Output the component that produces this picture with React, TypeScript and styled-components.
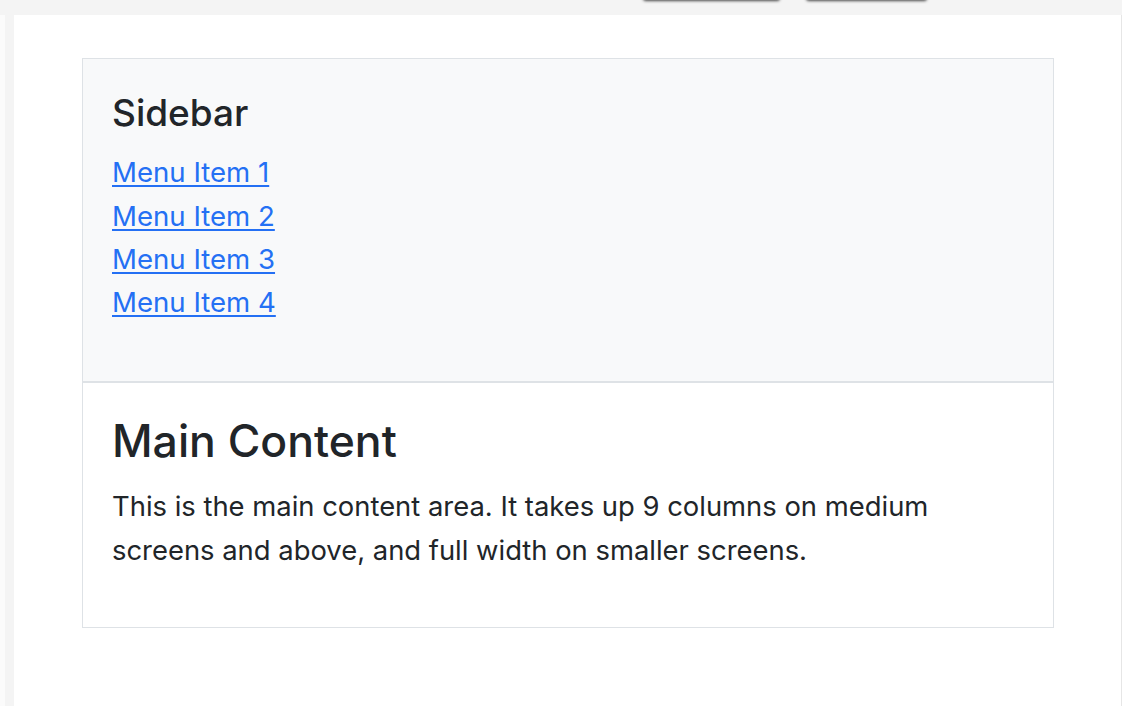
import React from "react";
import styled, { createGlobalStyle } from "styled-components";

const GlobalStyle = createGlobalStyle`
  html, body { margin: 0; padding: 0; }
  body {
    background: #f4f4f4;
    font-family: Inter, "Noto Sans", "Liberation Sans", sans-serif;
    color: #212529;
    overflow: hidden;
  }
`;

const Page = styled.div`
  display: flex;
  flex-direction: column;
  width: 1122px;
  height: 706px;
  background: #f4f4f4;
`;

const TopBar = styled.div`
  height: 15px;
  flex: none;
  display: flex;
  padding-left: 643px;
  gap: 26px;
`;

const GhostButton = styled.div<{ $w: number }>`
  width: ${(p) => p.$w}px;
  height: 20px;
  margin-top: -20px;
  border-radius: 3px;
  background: #d8d8d8;
  box-shadow: 0 1px 3px rgba(0, 0, 0, 0.7);
`;

const Body = styled.div`
  flex: 1;
  display: flex;
`;

const EdgeStrip = styled.div`
  width: 5px;
  background: #fbfbfb;
  margin-right: 9px;
`;

const Panel = styled.main`
  flex: 1;
  background: #ffffff;
  border-right: 1px solid #e6e6e6;
  padding: 43px 67px 0 68px;
`;

const Card = styled.div`
  border: 1px solid #dee2e6;
  display: flex;
  flex-direction: column;
`;

const Sidebar = styled.aside`
  background: #f8f9fa;
  border-bottom: 2px solid #dee2e6;
  padding: 32px 29px 40px;
  height: 324px;
  box-sizing: border-box;
`;

const SidebarTitle = styled.h4`
  margin: 0 0 16px;
  font-size: 37px;
  font-weight: 500;
  line-height: 1.2;
`;

const Menu = styled.ul`
  list-style: none;
  margin: 0;
  padding: 0;
`;

const MenuItem = styled.li`
  font-size: 27.6px;
  line-height: 43.2px;
`;

const MenuLink = styled.a`
  color: #2470f4;
  text-decoration: underline;
  text-decoration-thickness: 2px;
  text-underline-offset: 3px;
`;

const MainArea = styled.section`
  padding: 32px 29px 0;
  height: 244px;
  box-sizing: border-box;
`;

const MainTitle = styled.h3`
  margin: 0 0 17px;
  font-size: 44.5px;
  font-weight: 500;
  line-height: 1.2;
`;

const Paragraph = styled.p`
  margin: 0;
  font-size: 27.4px;
  line-height: 43.2px;
  max-width: 880px;
`;

const menuItems = ["Menu Item 1", "Menu Item 2", "Menu Item 3", "Menu Item 4"];

export default function App() {
  return (
    <>
      <GlobalStyle />
      <Page>
        <TopBar>
          <GhostButton $w={137} />
          <GhostButton $w={121} />
        </TopBar>
        <Body>
          <EdgeStrip />
          <Panel>
            <Card>
              <Sidebar>
                <SidebarTitle>Sidebar</SidebarTitle>
                <Menu>
                  {menuItems.map((m) => (
                    <MenuItem key={m}>
                      <MenuLink href="#">{m}</MenuLink>
                    </MenuItem>
                  ))}
                </Menu>
              </Sidebar>
              <MainArea>
                <MainTitle>Main Content</MainTitle>
                <Paragraph>
                  This is the main content area. It takes up 9 columns on medium
                  screens and above, and full width on smaller screens.
                </Paragraph>
              </MainArea>
            </Card>
          </Panel>
        </Body>
      </Page>
    </>
  );
}
